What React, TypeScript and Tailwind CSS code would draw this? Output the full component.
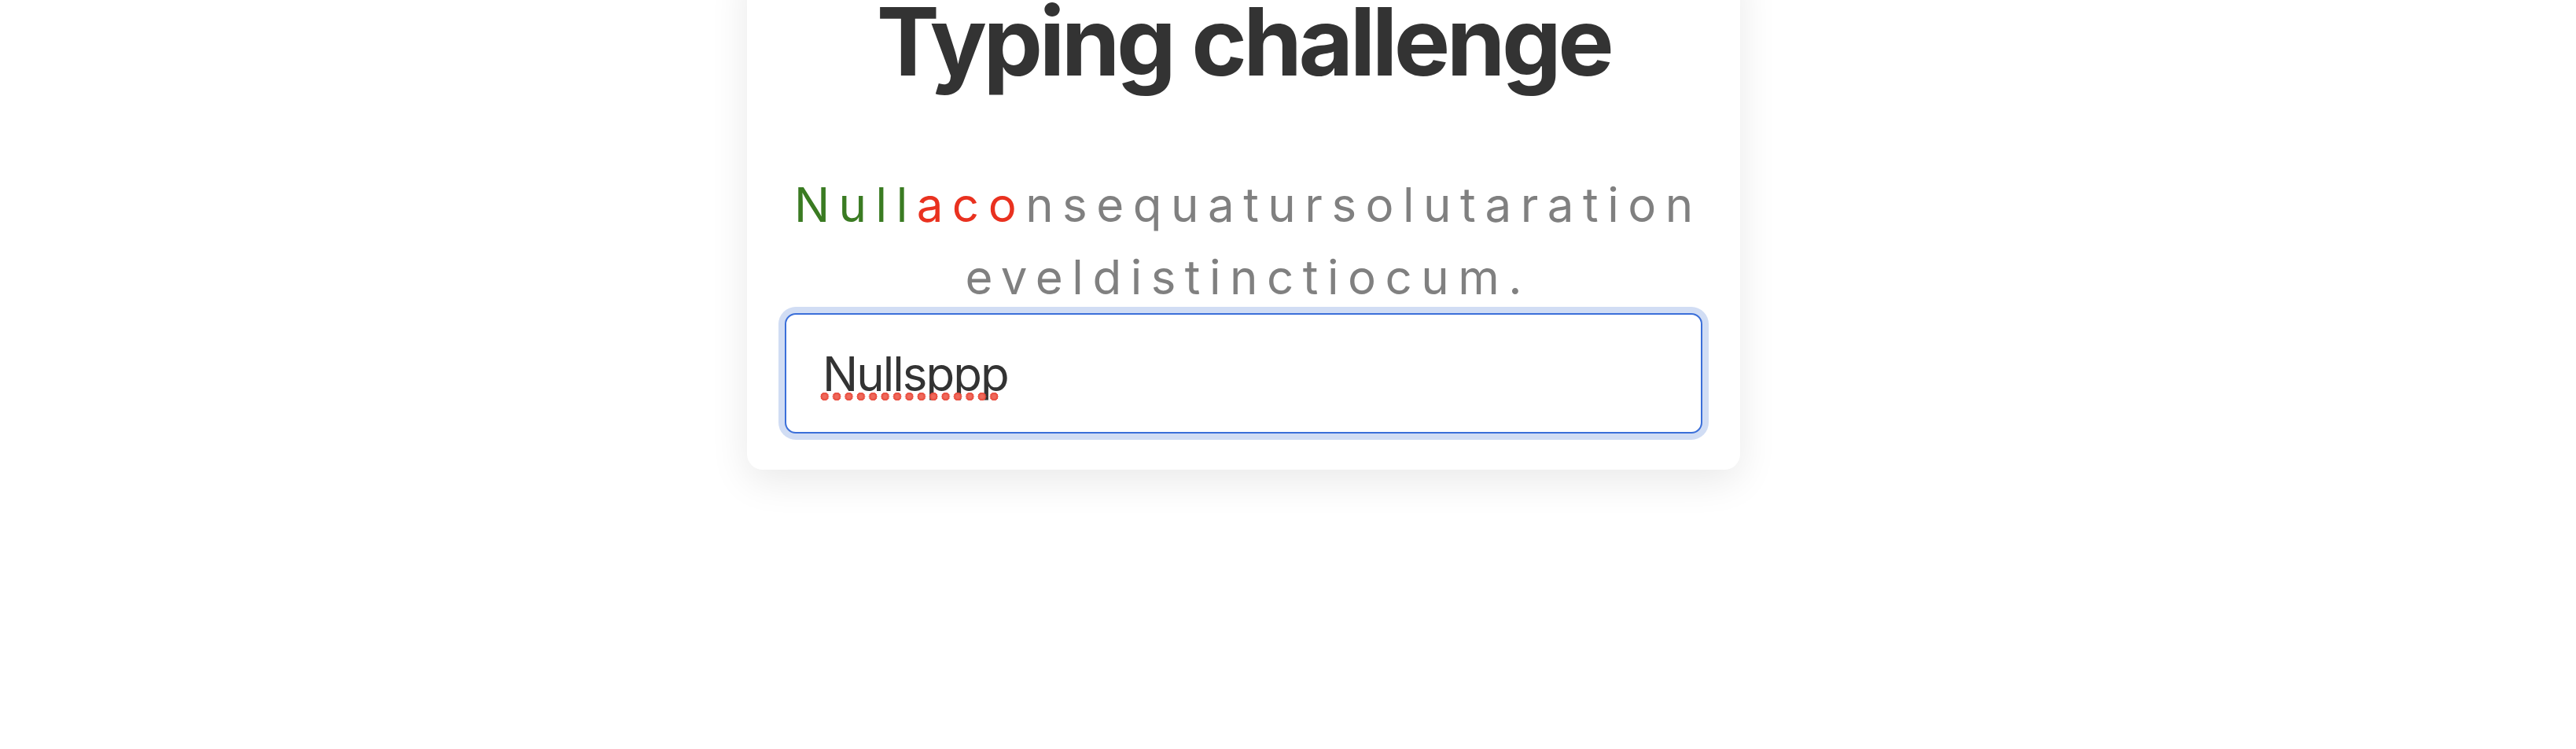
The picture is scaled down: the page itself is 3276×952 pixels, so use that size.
import { useState } from "react";

const typed = "Nullsppp";
const line1 = "Nullaconsequatursolutaration";
const line2 = "eveldistinctiocum.";

function Chars({ text, offset }: { text: string; offset: number }) {
  return (
    <div className="whitespace-nowrap">
      {text.split("").map((ch, i) => {
        const idx = i + offset;
        let color = "text-[#808080]";
        if (idx < 4) color = "text-[#3a7b22]";
        else if (idx < 7) color = "text-[#e9311f]";
        return (
          <span key={idx} className={color}>
            {ch}
          </span>
        );
      })}
    </div>
  );
}

export default function App() {
  const [value, setValue] = useState(typed);

  return (
    <div className="min-h-screen bg-white flex justify-center pr-[113px] font-['Inter','Noto_Sans',sans-serif] overflow-hidden">
      <div className="mt-[-55px] w-[1263px] h-fit bg-white rounded-[20px] shadow-[0_14px_50px_rgba(0,0,0,0.09)] px-12 pt-12 pb-[46px]">
        <h1 className="text-center text-[120px] leading-none font-bold tracking-[-4.5px] text-[#333333]">
          Typing challenge
        </h1>

        <div className="mt-[101px] pl-[11.5px] text-center text-[60px] leading-[92px] tracking-[11.5px]">
          <Chars text={line1} offset={0} />
          <Chars text={line2} offset={line1.length} />
        </div>

        <div className="relative">
          <input
            value={value}
            onChange={(e) => setValue(e.target.value)}
            spellCheck={false}
            className="block w-full h-[153px] bg-white border-2 border-[#3b6fd9] rounded-[14px] pl-[46px] text-[60px] tracking-[-2px] text-[#333333] outline-none ring-8 ring-[#d1ddf4]"
          />
          {/* spellcheck squiggle */}
          <span className="absolute left-[43px] top-[100px] h-[12px] w-[231px] pointer-events-none bg-[radial-gradient(circle,#ef6a5c_2px,#e8483a_5px,transparent_5.5px)] bg-[length:15.4px_12px]" />
        </div>
      </div>
    </div>
  );
}
